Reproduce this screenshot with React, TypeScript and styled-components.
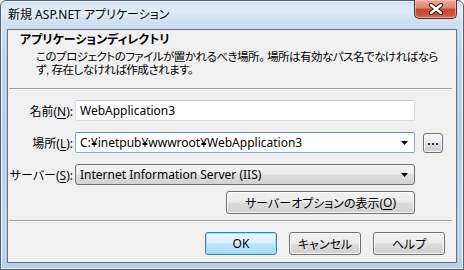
import React from "react";
import styled, { createGlobalStyle } from "styled-components";

const GlobalStyle = createGlobalStyle`
  html, body { margin: 0; padding: 0; }
  body {
    width: 464px;
    height: 270px;
    overflow: hidden;
    background: #ffffff;
    font-family: "Noto Sans", "Noto Sans CJK JP", sans-serif;
    font-size: 12px;
    font-feature-settings: "palt";
  }
`;

const Window = styled.div`
  box-sizing: border-box;
  width: 464px;
  height: 270px;
  display: flex;
  flex-direction: column;
  border: 1px solid #4d6178;
  border-radius: 6px 6px 0 0;
  background: linear-gradient(
    180deg,
    #cfe0f0 0px,
    #e0ebf6 10px,
    #cddff0 22px,
    #c0d6ea 60px,
    #bad0e7 140px,
    #c6d9ec 230px,
    #b6cde5 270px
  );
  box-shadow: inset 0 0 0 1px rgba(255, 255, 255, 0.7);
`;

const TitleBar = styled.div`
  height: 28px;
  display: flex;
  align-items: flex-start;
  justify-content: space-between;
  padding-left: 7px;
  padding-right: 6px;
`;

const TitleText = styled.div`
  margin-top: 6px;
  font-size: 12px;
  line-height: 16px;
  color: #000;
  text-shadow: 0 0 6px rgba(255, 255, 255, 0.9);
`;

const CloseButton = styled.div`
  box-sizing: border-box;
  margin-top: -1px;
  width: 43px;
  height: 19px;
  display: flex;
  align-items: center;
  justify-content: center;
  border: 1px solid #5b2a22;
  border-top: none;
  border-radius: 0 0 5px 5px;
  background: linear-gradient(
    180deg,
    #e9a99a 0%,
    #dc8470 45%,
    #c24a30 50%,
    #c8523a 80%,
    #d9725c 100%
  );
  box-shadow: inset 0 0 0 1px rgba(255, 210, 200, 0.55);
`;

const FrameBody = styled.div`
  flex: 1;
  display: flex;
  padding: 0 6px 6px 6px;
`;

const Client = styled.div`
  flex: 1;
  display: flex;
  flex-direction: column;
  border: 1px solid #5f6f80;
  background: #f0f0f0;
`;

const Header = styled.div`
  height: 58px;
  padding: 2px 0 0 12px;
  box-sizing: border-box;
`;

const HeaderTitle = styled.div`
  font-weight: bold;
  line-height: 16px;
  color: #000;
`;

const HeaderDesc = styled.div`
  margin-top: 3px;
  padding-left: 16px;
  display: flex;
  flex-direction: column;
`;

const DescLine = styled.div`
  font-family: "Liberation Sans", "Noto Sans CJK JP", sans-serif;
  font-size: 11.5px;
  letter-spacing: -0.5px;
  line-height: 13px;
  height: 13px;
  white-space: nowrap;
  color: #000;
`;

const Separator = styled.div`
  margin: 0 4px 0 1px;
  height: 1px;
  background: #a0a0a0;
  border-bottom: 1px solid #ffffff;
`;

const Form = styled.div`
  display: flex;
  flex-direction: column;
  gap: 11px;
  padding-top: 10px;
`;

const Row = styled.div`
  display: flex;
  align-items: center;
  height: 21px;
`;

const Label = styled.div`
  width: 65px;
  margin-right: 2px;
  text-align: right;
  white-space: nowrap;
  color: #000;
`;

const Key = styled.span`
  text-decoration: underline;
  text-underline-offset: 2px;
`;

const Field = styled.div<{ $variant: "text" | "combo" | "list" }>`
  box-sizing: border-box;
  width: 340px;
  height: 21px;
  display: flex;
  align-items: center;
  padding-left: 4px;
  padding-right: 6px;
  color: #000;
  white-space: nowrap;
  border: 1px solid
    ${(p) =>
      p.$variant === "text" ? "#d8dde4" : p.$variant === "combo" ? "#7fabd6" : "#707070"};
  border-top-color: ${(p) =>
    p.$variant === "text" ? "#c4c8ce" : p.$variant === "combo" ? "#5f91c4" : "#707070"};
  border-radius: ${(p) => (p.$variant === "list" ? "3px" : "2px")};
  background: ${(p) =>
    p.$variant === "list"
      ? "linear-gradient(180deg, #f4f4f4 0%, #ececec 48%, #dedede 52%, #d2d2d2 100%)"
      : "#ffffff"};
`;

const FieldText = styled.span`
  flex: 1;
`;

const Ellipsis = styled.div`
  box-sizing: border-box;
  width: 20px;
  height: 20px;
  margin-left: 8px;
  display: flex;
  align-items: center;
  justify-content: center;
  gap: 2px;
  padding-top: 3px;
  border: 1px solid #707070;
  border-radius: 3px;
  background: linear-gradient(180deg, #f4f4f4 0%, #ebebeb 48%, #dcdcdc 52%, #cfcfcf 100%);
  box-shadow: inset 0 0 0 1px rgba(255, 255, 255, 0.8);
`;

const Dot = styled.span`
  width: 2px;
  height: 2px;
  background: #2a2a7a;
`;

const OptionRow = styled.div`
  display: flex;
  justify-content: flex-end;
  padding: 6px 41px 6px 0;
`;

const Button = styled.div<{ $width: number; $default?: boolean }>`
  box-sizing: border-box;
  width: ${(p) => p.$width}px;
  height: 23px;
  display: flex;
  align-items: center;
  justify-content: center;
  color: #000;
  border: 1px solid ${(p) => (p.$default ? "#3c7fb1" : "#707070")};
  border-radius: 3px;
  background: ${(p) =>
    p.$default
      ? "linear-gradient(180deg, #eaf6fd 0%, #d9f0fc 48%, #bee6fd 52%, #a7d9f5 100%)"
      : "linear-gradient(180deg, #f2f2f2 0%, #ebebeb 48%, #dddddd 52%, #cfcfcf 100%)"};
  box-shadow: inset 0 0 0 1px
    ${(p) => (p.$default ? "rgba(150, 225, 250, 0.9)" : "rgba(255, 255, 255, 0.85)")};
  white-space: nowrap;
`;

const ButtonBar = styled.div`
  display: flex;
  justify-content: flex-end;
  gap: 12px;
  padding: 10px 11px 0 0;
`;

const Arrow = () => (
  <svg width="7" height="4" viewBox="0 0 7 4">
    <path d="M0 0 H7 L3.5 4 Z" fill="#000" />
  </svg>
);

const CloseGlyph = () => (
  <svg width="16" height="12" viewBox="0 0 16 12">
    <path
      d="M3 2 L13 10 M13 2 L3 10"
      stroke="#4a1a14"
      strokeWidth="4.4"
      strokeLinecap="round"
    />
    <path
      d="M3 2 L13 10 M13 2 L3 10"
      stroke="#ffffff"
      strokeWidth="2.4"
      strokeLinecap="round"
    />
  </svg>
);

export default function App() {
  return (
    <>
      <GlobalStyle />
      <Window>
        <TitleBar>
          <TitleText>新規 ASP.NET アプリケーション</TitleText>
          <CloseButton>
            <CloseGlyph />
          </CloseButton>
        </TitleBar>
        <FrameBody>
          <Client>
            <Header>
              <HeaderTitle>アプリケーションディレクトリ</HeaderTitle>
              <HeaderDesc>
                <DescLine>
                  このプロジェクトのファイルが置かれるべき場所。 場所は有効なパス名でなければなら
                </DescLine>
                <DescLine>ず, 存在しなければ作成されます。</DescLine>
              </HeaderDesc>
            </Header>
            <Separator />
            <Form>
              <Row>
                <Label>
                  名前(<Key>N</Key>):
                </Label>
                <Field $variant="text">
                  <FieldText>WebApplication3</FieldText>
                </Field>
              </Row>
              <Row>
                <Label>
                  場所(<Key>L</Key>):
                </Label>
                <Field $variant="combo">
                  <FieldText>C:¥inetpub¥wwwroot¥WebApplication3</FieldText>
                  <Arrow />
                </Field>
                <Ellipsis>
                  <Dot />
                  <Dot />
                  <Dot />
                </Ellipsis>
              </Row>
              <Row>
                <Label>
                  サーバー(<Key>S</Key>):
                </Label>
                <Field $variant="list">
                  <FieldText>Internet Information Server (IIS)</FieldText>
                  <Arrow />
                </Field>
              </Row>
            </Form>
            <OptionRow>
              <Button $width={189}>
                サーバーオプションの表示(<Key>O</Key>)
              </Button>
            </OptionRow>
            <Separator />
            <ButtonBar>
              <Button $width={72} $default>
                OK
              </Button>
              <Button $width={72}>キャンセル</Button>
              <Button $width={72}>ヘルプ</Button>
            </ButtonBar>
          </Client>
        </FrameBody>
      </Window>
    </>
  );
}
